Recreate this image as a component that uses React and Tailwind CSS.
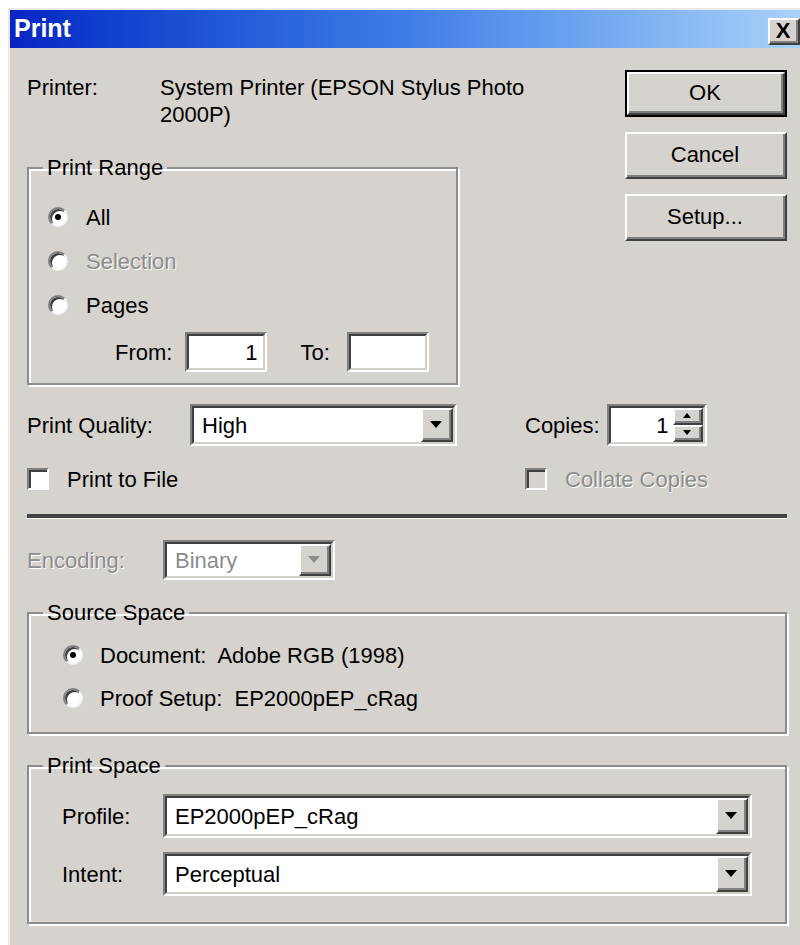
import React from 'react';

// Win2000-style 3D edges, scaled up
function Sunken({ className = '', children }) {
  return (
    <div className={`border-2 border-t-[#808080] border-l-[#808080] border-r-white border-b-white ${className}`}>
      <div className="flex h-full w-full items-center border-2 border-t-[#404040] border-l-[#404040] border-r-[#d4d0c8] border-b-[#d4d0c8] bg-white">
        {children}
      </div>
    </div>
  );
}

function Raised({ className = '', children }) {
  return (
    <div className={`border-2 border-t-white border-l-white border-r-[#404040] border-b-[#404040] bg-[#d6d3ce] ${className}`}>
      <div className="flex h-full w-full items-center justify-center border-r-2 border-b-2 border-[#808080]">
        {children}
      </div>
    </div>
  );
}

function Arrow({ disabled = false }) {
  return (
    <svg width="12" height="7" viewBox="0 0 12 7">
      <path d="M0 0H12L6 7Z" fill={disabled ? '#8c8c8c' : '#000'} />
    </svg>
  );
}

function Select({ value, className = '', disabled = false }) {
  return (
    <Sunken className={className}>
      <span className={`flex-1 pl-[8px] ${disabled ? 'text-[#8c8c8c]' : 'text-black'}`}>{value}</span>
      <Raised className="h-full w-[32px]">
        <Arrow disabled={disabled} />
      </Raised>
    </Sunken>
  );
}

function Radio({ checked = false }) {
  return (
    <div className="flex h-[20px] w-[20px] items-center justify-center rounded-full border-2 border-t-[#808080] border-l-[#808080] border-r-[#f4f4f4] border-b-[#f4f4f4] bg-white shadow-[inset_2px_2px_0_#404040]">
      {checked && <div className="h-[6px] w-[6px] rounded-full bg-black" />}
    </div>
  );
}

function Check({ disabled = false }) {
  return (
    <div
      className={`h-[22px] w-[22px] border-2 border-t-[#808080] border-l-[#808080] border-r-white border-b-white shadow-[inset_2px_2px_0_#404040] ${
        disabled ? 'bg-[#d6d3ce]' : 'bg-white'
      }`}
    />
  );
}

function Group({ title, className = '', bodyClass = '', children }) {
  return (
    <fieldset className={`border-2 border-[#8c8c8c] shadow-[2px_2px_0_#fff,inset_2px_2px_0_#fff] ${className}`}>
      <legend className="ml-[14px] px-[4px] leading-[27px]">{title}</legend>
      <div className={bodyClass}>{children}</div>
    </fieldset>
  );
}

const dim = 'text-[#8c8c8c] [text-shadow:1px_1px_0_#fff]';

export default function App() {
  return (
    <div className="h-[945px] w-[800px] overflow-hidden bg-white font-['Liberation_Sans',Arial,sans-serif] text-[22px] leading-[27px] text-black">
      <div className="ml-[8px] mt-[8px] h-[937px] w-[792px] border-l-2 border-t-2 border-[#ebe9e5] bg-[#d6d3ce]">
        {/* title bar */}
        <div className="flex h-[38px] items-start bg-gradient-to-r from-[#0a24c4] via-[#3f7de6] to-[#a8d2f8]">
          <span className="ml-[4px] mt-[5px] text-[25px] font-bold text-white">Print</span>
          <Raised className="ml-auto mt-[8px] h-[27px] w-[32px]">
            <span className="text-[22px] font-bold leading-none">X</span>
          </Raised>
        </div>

        <div className="pl-[17px] pr-[13px]">
          {/* printer + range / buttons */}
          <div className="flex pt-[22px]">
            <div className="flex-1">
              <div className="mt-[4px] flex">
                <span className="w-[133px]">Printer:</span>
                <span className="w-[400px]">System Printer (EPSON Stylus Photo 2000P)</span>
              </div>
              <Group title="Print Range" className="mt-[26px] w-[431px]" bodyClass="pb-[11px] pl-[19px] pt-[14px]">
                <div className="flex h-[44px] items-center gap-[18px]">
                  <Radio checked />
                  <span>All</span>
                </div>
                <div className="flex h-[44px] items-center gap-[18px]">
                  <Radio />
                  <span className={dim}>Selection</span>
                </div>
                <div className="flex h-[44px] items-center gap-[18px]">
                  <Radio />
                  <span>Pages</span>
                </div>
                <div className="mt-[5px] flex items-center">
                  <span className="ml-[67px]">From:</span>
                  <Sunken className="ml-[13px] h-[40px] w-[82px]">
                    <span className="flex-1 pr-[6px] text-right">1</span>
                  </Sunken>
                  <span className="ml-[33px]">To:</span>
                  <Sunken className="ml-[17px] h-[40px] w-[82px]" />
                </div>
              </Group>
            </div>
            <div className="flex w-[162px] flex-col gap-[15px]">
              <div className="h-[47px] border-2 border-black">
                <Raised className="h-full w-full">OK</Raised>
              </div>
              <Raised className="h-[47px]">Cancel</Raised>
              <Raised className="h-[47px]">Setup...</Raised>
            </div>
          </div>

          {/* quality / copies */}
          <div className="mt-[19px] flex h-[42px] items-center">
            <span className="w-[163px]">Print Quality:</span>
            <Select value="High" className="h-[42px] w-[267px]" />
            <span className="ml-[68px]">Copies:</span>
            <Sunken className="ml-[7px] h-[42px] w-[100px]">
              <span className="flex-1 pr-[4px] text-right">1</span>
              <div className="flex h-full w-[30px] flex-col">
                <Raised className="flex-1">
                  <svg width="8" height="5" viewBox="0 0 8 5">
                    <path d="M0 5H8L4 0Z" fill="#000" />
                  </svg>
                </Raised>
                <Raised className="flex-1">
                  <svg width="8" height="5" viewBox="0 0 8 5">
                    <path d="M0 0H8L4 5Z" fill="#000" />
                  </svg>
                </Raised>
              </div>
            </Sunken>
          </div>

          <div className="mt-[22px] flex h-[22px] items-center">
            <div className="flex w-[498px] items-center gap-[18px]">
              <Check />
              <span>Print to File</span>
            </div>
            <div className="flex items-center gap-[18px]">
              <Check disabled />
              <span className={dim}>Collate Copies</span>
            </div>
          </div>

          {/* divider */}
          <div className="mt-[24px] h-[4px] w-[760px] bg-[#444] shadow-[0_1px_0_#fff]" />

          <div className="mt-[22px] flex h-[40px] items-center">
            <span className={`w-[136px] ${dim}`}>Encoding:</span>
            <Select value="Binary" disabled className="h-[40px] w-[172px]" />
          </div>

          <Group title="Source Space" className="mt-[19px] w-[760px]" bodyClass="pb-[14px] pl-[34px] pt-[9px]">
            <div className="flex h-[40px] items-center gap-[17px]">
              <Radio checked />
              <span>Document:&nbsp; Adobe RGB (1998)</span>
            </div>
            <div className="mt-[3px] flex h-[40px] items-center gap-[17px]">
              <Radio />
              <span>Proof Setup:&nbsp; EP2000pEP_cRag</span>
            </div>
          </Group>

          <Group title="Print Space" className="mt-[18px] w-[760px]" bodyClass="pb-[26px] pl-[33px] pt-[15px]">
            <div className="flex h-[44px] items-center">
              <span className="w-[101px]">Profile:</span>
              <Select value="EP2000pEP_cRag" className="h-[44px] w-[589px]" />
            </div>
            <div className="mt-[14px] flex h-[44px] items-center">
              <span className="w-[101px]">Intent:</span>
              <Select value="Perceptual" className="h-[44px] w-[589px]" />
            </div>
          </Group>
        </div>
      </div>
    </div>
  );
}
